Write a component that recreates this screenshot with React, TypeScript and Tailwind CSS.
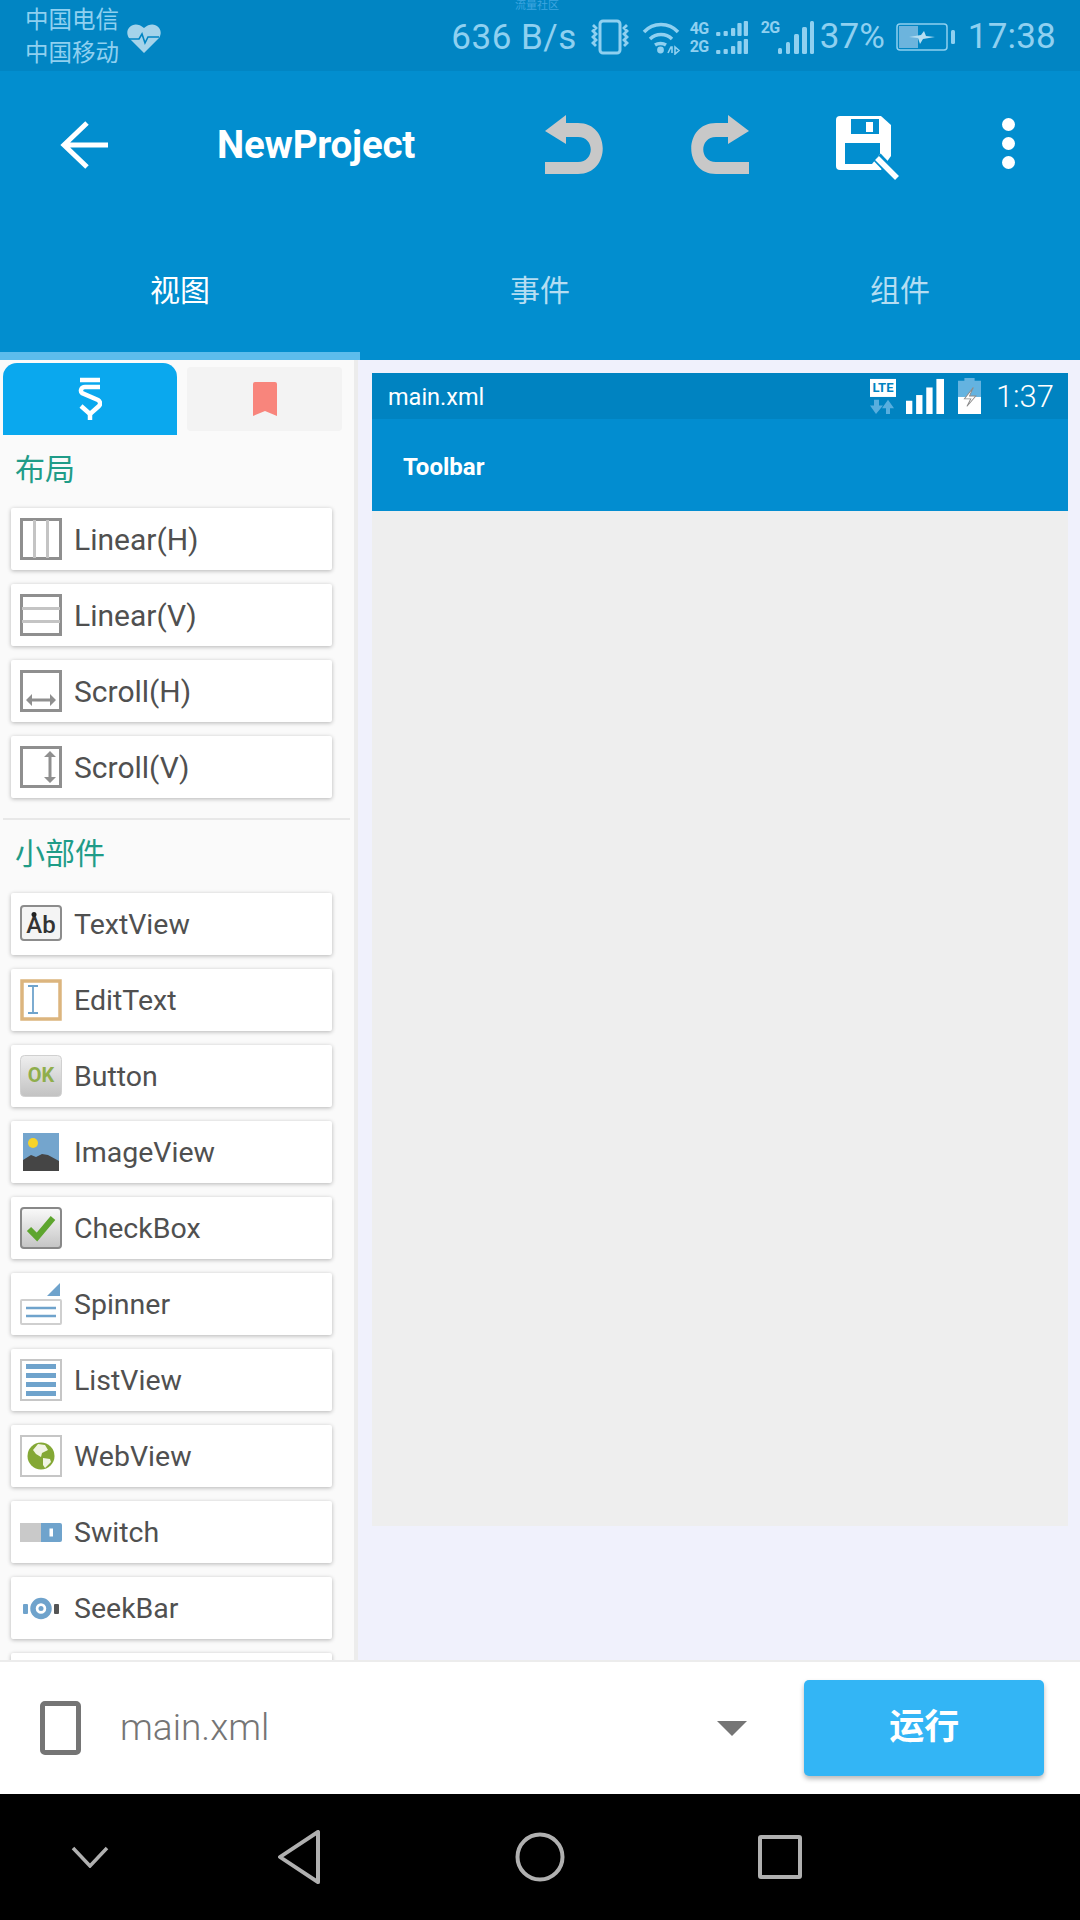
import type { ReactNode } from 'react'

const G = '#8f8f8f'
const B = '#6fa3cc'

function Box({ children }: { children: ReactNode }) {
  return (
    <svg width="42" height="42" viewBox="0 0 42 42" className="shrink-0">
      {children}
    </svg>
  )
}

const icons: Record<string, ReactNode> = {
  linearH: (
    <Box>
      <rect x="1.5" y="1.5" width="39" height="39" fill="none" stroke={G} strokeWidth="3" />
      <path d="M14.5 2v38M27.5 2v38" stroke="#c4c4c4" strokeWidth="3" />
    </Box>
  ),
  linearV: (
    <Box>
      <rect x="1.5" y="1.5" width="39" height="39" fill="none" stroke={G} strokeWidth="3" />
      <path d="M2 14.5h38M2 27.5h38" stroke="#c4c4c4" strokeWidth="3" />
    </Box>
  ),
  scrollH: (
    <Box>
      <rect x="1.5" y="1.5" width="39" height="39" fill="none" stroke={G} strokeWidth="3" />
      <path d="M8 30h26" stroke={G} strokeWidth="3" />
      <path d="M6 30l6-6v12zM36 30l-6-6v12z" fill={G} />
    </Box>
  ),
  scrollV: (
    <Box>
      <rect x="1.5" y="1.5" width="39" height="39" fill="none" stroke={G} strokeWidth="3" />
      <path d="M30 8v26" stroke={G} strokeWidth="3" />
      <path d="M30 5l-6 6h12zM30 37l-6-6h12z" fill={G} />
    </Box>
  ),
  text: (
    <Box>
      <rect x="1" y="3" width="40" height="34" rx="3" fill="#f4f4f4" stroke="#8c8c8c" strokeWidth="2" />
      <text x="21" y="30" textAnchor="middle" fontSize="24" fontWeight="500" fill="#333" fontFamily="Roboto">Ab</text>
      <circle cx="14" cy="11.5" r="2.5" fill="#222" />
    </Box>
  ),
  edit: (
    <Box>
      <rect x="2" y="2" width="38" height="38" fill="#fff" stroke="#dcb57e" strokeWidth="3.5" />
      <path d="M13 7v27M8 7h10M8 34h10" stroke={B} strokeWidth="1.8" fill="none" />
    </Box>
  ),
  button: (
    <Box>
      <defs>
        <linearGradient id="okGrad" x1="0" y1="0" x2="0" y2="1">
          <stop offset="0" stopColor="#efefef" />
          <stop offset="1" stopColor="#c2c2c2" />
        </linearGradient>
      </defs>
      <rect x="0.5" y="0.5" width="41" height="41" rx="4" fill="url(#okGrad)" stroke="#d0d0d0" />
      <text x="21" y="27" textAnchor="middle" fontSize="20" fontWeight="700" fill="#8fae4c" fontFamily="Roboto">OK</text>
    </Box>
  ),
  image: (
    <Box>
      <rect x="3" y="2" width="36" height="38" fill="#74a5cd" />
      <circle cx="13" cy="12" r="5" fill="#f6d32a" />
      <path d="M3 29l8-5 5 2 6-3 6 1 11 6v10H3z" fill="#454545" />
    </Box>
  ),
  check: (
    <Box>
      <defs>
        <linearGradient id="ckGrad" x1="0" y1="0" x2="0" y2="1">
          <stop offset="0" stopColor="#fafafa" />
          <stop offset="1" stopColor="#c4c4c4" />
        </linearGradient>
      </defs>
      <rect x="1" y="1" width="40" height="40" rx="3" fill="url(#ckGrad)" stroke="#888" strokeWidth="2" />
      <path d="M9 22l8 8 16-19" fill="none" stroke="#5da52e" strokeWidth="6" />
    </Box>
  ),
  spinner: (
    <Box>
      <path d="M40 0v13H27z" fill={B} />
      <rect x="1" y="17" width="40" height="24" rx="1" fill="#fff" stroke="#cfcfcf" strokeWidth="2" />
      <path d="M6 25h30M6 33h30" stroke={B} strokeWidth="2.5" />
    </Box>
  ),
  list: (
    <Box>
      <rect x="1" y="1" width="40" height="40" fill="#fff" stroke="#c6c6c6" strokeWidth="2" />
      <path d="M6 7.5h30M6 16.5h30M6 25.5h30M6 34.5h30" stroke={B} strokeWidth="5" />
    </Box>
  ),
  web: (
    <Box>
      <rect x="1" y="1" width="40" height="40" fill="#fff" stroke="#c6c6c6" strokeWidth="2" />
      <circle cx="21" cy="21" r="13.5" fill="#84a835" />
      <path d="M18 9l7 1 3 5-6 3-1 4-5-3-3-4zM23 23l7 1 1 3-6 6-2-3z" fill="#f1f4e4" />
    </Box>
  ),
  toggle: (
    <Box>
      <path d="M0 12h22v19H0z" fill="#c9c9c9" />
      <path d="M21 12h19a2 2 0 012 2v15a2 2 0 01-2 2H21z" fill={B} />
      <rect x="29.5" y="17.5" width="3.5" height="8" fill="#fff" />
    </Box>
  ),
  seek: (
    <Box>
      <rect x="3" y="17" width="5" height="10" rx="1" fill={B} />
      <rect x="34" y="17" width="5" height="10" rx="1" fill="#555" />
      <circle cx="21" cy="21.5" r="8" fill="none" stroke={B} strokeWidth="5.5" />
      <circle cx="21" cy="21.5" r="2.5" fill={B} />
    </Box>
  ),
}

const layouts = [
  { key: 'linearH', label: 'Linear(H)' },
  { key: 'linearV', label: 'Linear(V)' },
  { key: 'scrollH', label: 'Scroll(H)' },
  { key: 'scrollV', label: 'Scroll(V)' },
]

const widgets = [
  { key: 'text', label: 'TextView' },
  { key: 'edit', label: 'EditText' },
  { key: 'button', label: 'Button' },
  { key: 'image', label: 'ImageView' },
  { key: 'check', label: 'CheckBox' },
  { key: 'spinner', label: 'Spinner' },
  { key: 'list', label: 'ListView' },
  { key: 'web', label: 'WebView' },
  { key: 'toggle', label: 'Switch' },
  { key: 'seek', label: 'SeekBar' },
]

function PaletteItem({ item, big }: { item: { key: string; label: string }; big?: boolean }) {
  return (
    <div className="h-[62px] w-[321px] shrink-0 ml-[11px] mb-[14px] flex items-center pl-[9px] gap-[12px] bg-white rounded-[2px] shadow-[0_1px_4px_rgba(0,0,0,0.28)]">
      {icons[item.key]}
      <span className={`text-[#505050] ${big ? 'text-[30px]' : 'text-[28.5px] pt-[3px]'}`}>{item.label}</span>
    </div>
  )
}

function StatusBar() {
  return (
    <div className="relative h-[71px] bg-[#0185c3] flex items-center text-[#8fd0f0]">
      <div className="absolute left-[515px] top-0 text-[11px] leading-[12px] text-[#3fa6e0]">流量社区</div>
      <div className="ml-[25px] flex flex-col text-[23.5px] leading-[33px] pt-[3px]">
        <span>中国电信</span>
        <span>中国移动</span>
      </div>
      <svg width="36" height="32" viewBox="0 0 36 32" className="ml-[7px] mt-[5px]">
        <path d="M18 31L3 16C-3 7 8-3 18 6c10-9 21 1 15 10z" fill="#a4d3ea" />
        <path d="M3 17h10l3-5 3 9 3-6h11" fill="none" stroke="#0185c3" strokeWidth="1.6" />
      </svg>
      <span className="ml-auto mt-[5px] text-[35px] tracking-[0.5px]">636 B/s</span>
      <svg width="44" height="36" viewBox="0 0 42 36" className="ml-[11px] mt-[3px]" fill="none" stroke="#8fd0f0">
        <rect x="11" y="2" width="20" height="32" rx="3" strokeWidth="3" />
        <path d="M4 6l3 3-3 3 3 3-3 3 3 3-3 3 3 3M38 6l-3 3 3 3-3 3 3 3-3 3 3 3-3 3" strokeWidth="2.8" />
      </svg>
      <svg width="40" height="36" viewBox="0 0 38 36" className="ml-[9px] mt-[3px]" fill="none" stroke="#8fd0f0">
        <path d="M2 13c9-10 25-10 34 0M8 20c6-6 16-6 22 0M13 26c3-2 8-2 11 0" strokeWidth="3.4" />
        <circle cx="18.5" cy="31" r="3.4" fill="#8fd0f0" stroke="none" />
        <path d="M26 34l3-6h1v6M33 28v7l4-3.5z" strokeWidth="1.6" />
      </svg>
      <div className="ml-[9px] mt-[3px] flex flex-col gap-[1px]">
        {['4G', '2G'].map(n => (
          <div key={n} className="flex items-end h-[17px] w-[59px]">
            <span className="text-[16px] leading-[17px] font-bold w-[23px] tracking-[-0.8px]">{n}</span>
            <svg width="34" height="16" viewBox="0 0 32 16" className="ml-[1px]" fill="#8fd0f0" preserveAspectRatio="none">
              <rect x="2" y="11" width="4" height="4" rx="1" />
              <rect x="9" y="10" width="4" height="5" rx="1" />
              <rect x="16" y="7" width="4" height="8" rx="1" />
              <rect x="22" y="2" width="4" height="13" rx="1" />
              <rect x="28" y="0" width="4" height="15" rx="1" />
            </svg>
          </div>
        ))}
      </div>
      <div className="ml-[12px] mt-[3px] relative w-[52px] h-[36px]">
        <span className="absolute left-0 top-[1px] text-[16px] leading-[16px] font-bold tracking-[-0.8px]">2G</span>
        <svg width="36" height="34" viewBox="0 0 36 34" className="absolute left-[17px] top-[1px]" fill="#8fd0f0">
          <rect x="0" y="28" width="4" height="6" rx="1.5" />
          <rect x="8" y="22" width="4" height="12" rx="1.5" />
          <rect x="16" y="14" width="5" height="20" rx="1.5" />
          <rect x="24" y="7" width="5" height="27" rx="1.5" />
          <rect x="32" y="1" width="4" height="33" rx="1.5" />
        </svg>
      </div>
      <span className="ml-[7px] mt-[4px] text-[35px]">37%</span>
      <svg width="60" height="30" viewBox="0 0 60 30" className="ml-[11px] mt-[3px]">
        <rect x="1" y="2" width="50" height="26" rx="3" fill="none" stroke="#8fd0f0" strokeWidth="1.5" />
        <rect x="3" y="4" width="19" height="22" fill="#6cb4dd" />
        <path d="M13 15l12-2 3-4 2 5 9 1-12 2-3 5-2-6z" fill="#b6def2" />
        <rect x="55" y="8" width="4" height="14" rx="1.5" fill="#8fd0f0" />
      </svg>
      <span className="ml-[12px] mr-[24px] mt-[4px] text-[35px] tracking-[0.2px]">17:38</span>
    </div>
  )
}

function AppBar() {
  return (
    <div className="bg-[#028ecf]">
      <div className="h-[147px] flex items-center">
        <svg width="48" height="48" viewBox="0 0 48 48" className="ml-[60px]" fill="none" stroke="#fff" strokeWidth="5">
          <path d="M48 24H4M27 2L4 24l23 22" />
        </svg>
        <span className="ml-[109px] text-[38.5px] font-bold text-white tracking-[-0.2px]">NewProject</span>
        <svg width="60" height="60" viewBox="0 0 60 60" className="ml-[130px]" fill="#c8c8c8">
          <path d="M0 16L21 0v8h12c33 0 33 51 0 51H0V47h33c17 0 17-25 0-25H21v7z" />
        </svg>
        <svg width="60" height="60" viewBox="0 0 60 60" className="ml-[84px]" fill="#c8c8c8">
          <path d="M60 16L39 0v8H27C-6 8-6 59 27 59h33V47H27C10 47 10 22 27 22h12v7z" />
        </svg>
        <svg width="64" height="66" viewBox="0 0 64 66" className="ml-[87px] mt-[8px]">
          <path d="M4 0h41l10 9v31L45 54H4a4 4 0 01-4-4V4a4 4 0 014-4z" fill="#fff" />
          <path d="M15 3h28v15H15z" fill="#028ecf" />
          <rect x="30" y="6" width="7" height="10" fill="#fff" />
          <path d="M9 27h35v11l-8 10H9z" fill="#028ecf" />
          <path d="M41 41l19 20" stroke="#028ecf" strokeWidth="10" />
          <path d="M41 42l20 20" stroke="#fff" strokeWidth="5.5" />
        </svg>
        <div className="ml-[102px] mb-[2px] flex flex-col gap-[6px]">
          <div className="w-[13px] h-[13px] rounded-full bg-white" />
          <div className="w-[13px] h-[13px] rounded-full bg-white" />
          <div className="w-[13px] h-[13px] rounded-full bg-white" />
        </div>
      </div>
      <div className="h-[134px] flex text-[30px] pt-[50px]">
        <div className="w-[360px] text-center text-white">视图</div>
        <div className="w-[360px] text-center text-[#b5ddf2]">事件</div>
        <div className="w-[360px] text-center text-[#b5ddf2]">组件</div>
      </div>
      <div className="h-[8px] w-[360px] bg-[#5cbcec]" />
    </div>
  )
}

function Palette() {
  return (
    <div className="w-[358px] shrink-0 bg-[#fafafa] border-r-[4px] border-[#ececec] overflow-hidden">
      <div className="flex items-center pl-[3px] pt-[3px] h-[75px]">
        <div className="w-[174px] h-[72px] bg-[#0aa8ee] rounded-t-[14px] flex items-center justify-center">
          <svg width="24" height="44" viewBox="0 0 24 44" fill="none" stroke="#fff" strokeWidth="4.5">
            <path d="M2 3h20M22 10H7c-4 0-5 4-3 6l16 7c2 1 3 4 1 6l-9 8-9-8" />
            <path d="M12 36v7" />
          </svg>
        </div>
        <div className="ml-[10px] w-[155px] h-[64px] bg-[#f3f3f3] rounded-[4px] flex items-center justify-center">
          <svg width="24" height="34" viewBox="0 0 24 34" fill="#f8857c">
            <path d="M2 0h20a2 2 0 012 2v32l-12-5-12 5V2a2 2 0 012-2z" />
          </svg>
        </div>
      </div>
      <div className="h-[73px] pl-[15px] pt-[15px] text-[30px] leading-[40px] text-[#1f9c88]">布局</div>
      {layouts.map(item => (
        <PaletteItem key={item.key} item={item} big />
      ))}
      <div className="h-[2px] ml-[3px] mr-[4px] mt-[20px] bg-[#e8e8e8]" />
      <div className="h-[73px] pl-[15px] pt-[14px] text-[30px] leading-[40px] text-[#1f9c88]">小部件</div>
      {widgets.map(item => (
        <PaletteItem key={item.key} item={item} />
      ))}
      <div className="h-[62px] w-[321px] ml-[11px] bg-white rounded-[2px] shadow-[0_1px_4px_rgba(0,0,0,0.28)]" />
    </div>
  )
}

function Preview() {
  return (
    <div className="flex-1 bg-[#f0f1fc] pl-[14px] pr-[12px] pt-[13px]">
      <div className="h-[46px] bg-[#0083c1] flex items-center pl-[16px] text-white">
        <span className="text-[23.5px] mt-[3px]">main.xml</span>
        <svg width="28" height="36" viewBox="0 0 28 38" className="ml-auto" preserveAspectRatio="none">
          <rect x="1" y="1" width="26" height="19" fill="#fff" />
          <text x="14" y="15" textAnchor="middle" fontSize="13" fontWeight="700" fill="#0083c1" fontFamily="Roboto">LTE</text>
          <path d="M7 38l-6-9h4v-6h5v6h4zM19 23l6 9h-4v6h-4v-6h-4z" fill="#58aede" />
        </svg>
        <svg width="38" height="36" viewBox="0 0 30 38" className="ml-[9px]" fill="#fff" preserveAspectRatio="none">
          <rect x="0" y="24" width="5" height="14" />
          <rect x="8" y="18" width="5" height="20" />
          <rect x="16" y="10" width="5" height="28" />
          <rect x="24" y="1" width="6" height="37" />
        </svg>
        <svg width="23" height="36" viewBox="0 0 18 38" className="ml-[14px]" preserveAspectRatio="none">
          <path d="M5 0h8v3h5v35H0V3h5z" fill="#64b3e0" />
          <rect x="0" y="20" width="18" height="18" fill="#fff" />
          <path d="M12 10l-7 12h5l-3 8 7-11H9z" fill="#fff" stroke="#8a8a8a" strokeWidth="0.8" />
        </svg>
        <span className="ml-[15px] mr-[14px] mt-[3px] text-[31px] font-light">1:37</span>
      </div>
      <div className="h-[92px] bg-[#028dd0] flex items-center pl-[31px] pt-[4px] text-white font-bold text-[24px]">Toolbar</div>
      <div className="h-[1015px] bg-[#eeeeee]" />
    </div>
  )
}

function BottomBar() {
  return (
    <div className="h-[134px] bg-white border-t-[2px] border-[#ececec] flex items-center">
      <div className="ml-[40px] w-[41px] h-[54px] rounded-[5px] border-[5px] border-[#757575]" />
      <span className="ml-[39px] text-[37px] text-[#757575] font-light">main.xml</span>
      <svg width="30" height="15" viewBox="0 0 30 15" className="ml-[448px]" fill="#757575">
        <path d="M0 0h30L15 15z" />
      </svg>
      <button className="ml-[57px] w-[240px] h-[96px] bg-[#33b5f5] rounded-[5px] shadow-[0_3px_5px_rgba(0,0,0,0.28)] text-white font-bold text-[35px]">运行</button>
    </div>
  )
}

function NavBar() {
  return (
    <div className="h-[126px] bg-black flex items-center">
      <svg width="38" height="22" viewBox="0 0 38 22" className="ml-[71px]" fill="none" stroke="#b0b0b0" strokeWidth="3.5">
        <path d="M2 2l17 18L36 2" />
      </svg>
      <svg width="44" height="54" viewBox="0 0 44 58" className="ml-[168px]" fill="none" stroke="#b0b0b0" strokeWidth="4" strokeLinejoin="round" preserveAspectRatio="none">
        <path d="M41 2v54L3 29z" />
      </svg>
      <svg width="50" height="50" viewBox="0 0 50 50" className="ml-[194px]" fill="none" stroke="#b0b0b0" strokeWidth="4">
        <circle cx="25" cy="25" r="22.5" />
      </svg>
      <div className="ml-[193px] w-[44px] h-[44px] rounded-[3px] border-[4px] border-[#b0b0b0]" />
    </div>
  )
}

export default function App() {
  return (
    <div className="w-[1080px] h-[1920px] flex flex-col overflow-hidden bg-white font-['Roboto','Noto_Sans_CJK_SC',sans-serif]">
      <StatusBar />
      <AppBar />
      <div className="h-[1300px] flex overflow-hidden">
        <Palette />
        <Preview />
      </div>
      <BottomBar />
      <NavBar />
    </div>
  )
}
